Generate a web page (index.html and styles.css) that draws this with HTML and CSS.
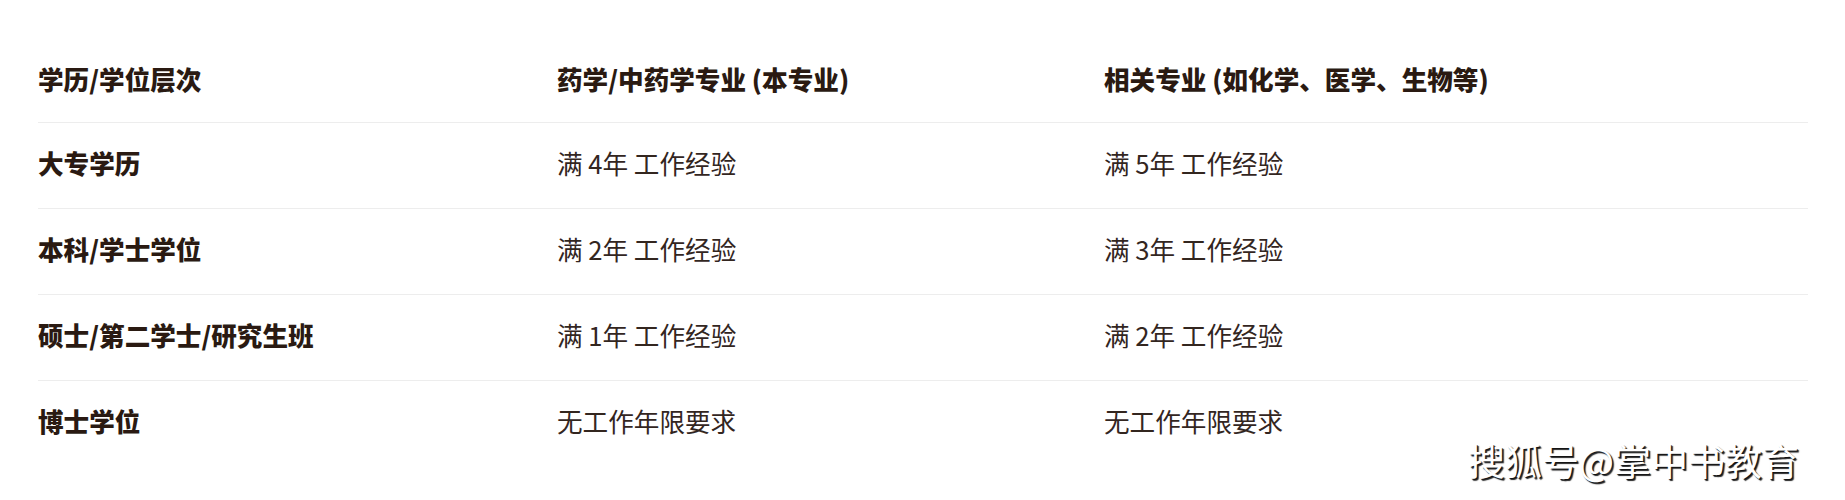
FILE: index.html
```html
<!DOCTYPE html>
<html lang="zh-CN">
<head>
<meta charset="utf-8">
<link rel="stylesheet" href="styles.css">
</head>
<body>
<div class="page">
  <table class="req">
    <colgroup>
      <col class="c1"><col class="c2"><col class="c3">
    </colgroup>
    <thead>
      <tr><th>学历/学位层次</th><th>药学/中药学专业 (本专业)</th><th>相关专业 (如化学、医学、生物等)</th></tr>
    </thead>
    <tbody>
      <tr><td class="lvl">大专学历</td><td>满 4年 工作经验</td><td>满 5年 工作经验</td></tr>
      <tr><td class="lvl">本科/学士学位</td><td>满 2年 工作经验</td><td>满 3年 工作经验</td></tr>
      <tr><td class="lvl">硕士/第二学士/研究生班</td><td>满 1年 工作经验</td><td>满 2年 工作经验</td></tr>
      <tr><td class="lvl">博士学位</td><td>无工作年限要求</td><td>无工作年限要求</td></tr>
    </tbody>
  </table>
  <div class="watermark">搜狐号@掌中书教育</div>
</div>
</body>
</html>
```

FILE: styles.css
```css
html, body {
  margin: 0;
  padding: 0;
  background: #ffffff;
}
.page {
  position: relative;
  width: 1845px;
  height: 500px;
  padding: 37px 0 0 38px;
  box-sizing: border-box;
  font-family: "Noto Sans CJK SC", "Noto Sans", sans-serif;
}
.req {
  border-collapse: collapse;
  table-layout: fixed;
  width: 1770px;
}
.c1 { width: 519px; }
.c2 { width: 547px; }
.c3 { width: 704px; }
.req th, .req td {
  height: 85px;
  padding: 0;
  text-align: left;
  vertical-align: middle;
  font-size: 25.6px;
  line-height: 1.2;
  border-bottom: 1px solid #ededed;
  white-space: nowrap;
}
.req td {
  height: 80px;
  padding-bottom: 5px;
}
.req th {
  font-weight: 900;
  color: #2a1a12;
}
.req td {
  font-weight: 400;
  color: #33261f;
}
.req td.lvl {
  font-weight: 900;
  color: #2a1a12;
}
.req tbody tr:last-child td {
  border-bottom: none;
}
.watermark {
  position: absolute;
  right: 46px;
  top: 436px;
  font-size: 37px;
  line-height: 48px;
  color: #ffffff;
  font-weight: 400;
  text-shadow: 2px 2px 1px rgba(0,0,0,0.85), 1px 1px 0 rgba(0,0,0,0.6);
}
```
